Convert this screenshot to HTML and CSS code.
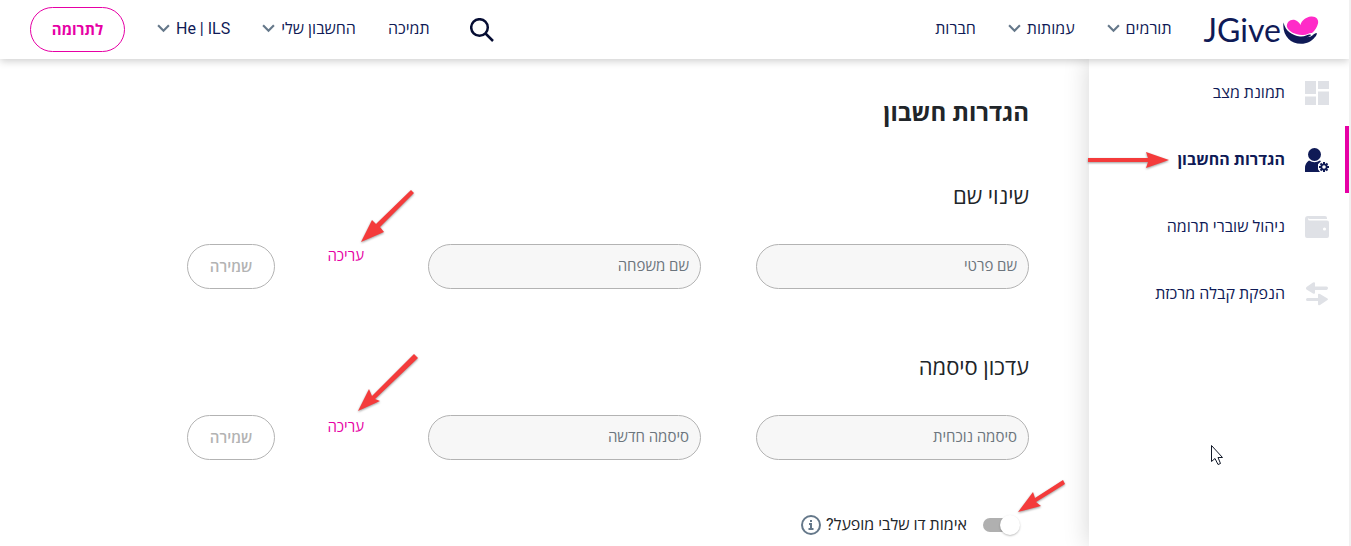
FILE: index.html
```html
<!DOCTYPE html>
<html lang="he" dir="rtl">
<head>
  <meta charset="UTF-8" />
  <title>JGive - הגדרות חשבון</title>
  <link rel="stylesheet" href="styles.css">
</head>
<body>
  <header class="header">
    <a class="logo" href="#" dir="ltr">
      <span>JGive</span>
      <svg width="36" height="28" viewBox="0 0 36 28">
        <path fill="#ff2bc8" d="M4 11C3 6 8 2.500 12 4c3 1 4.500 3 5.500 5C18.500 4.500 23 1 28 .500c5-.500 8 3 7 7-1 4-3 7-6 9.500-3-.500-5 2.500-10 2C12 18.500 6 16 4 11z"/>
        <path fill="#0f1a56" d="M.500 6.500C2.500 15 9 19.500 17 20.500c5 .500 7-2 10-2 2 .200 1 1.500-3 2.800 5 0 7-4.300 9.500-4.300 1 .500-.500 3-1.500 4C29 25 24 27.800 18 27.800 7 27.800-1 19 .500 6.500z"/>
      </svg>
    </a>
    <nav class="nav">
      <a href="#">תורמים <svg class="chevron" viewBox="0 0 12 8"><path d="M1 1l5 5 5-5"/></svg></a>
      <a href="#">עמותות <svg class="chevron" viewBox="0 0 12 8"><path d="M1 1l5 5 5-5"/></svg></a>
      <a href="#">חברות</a>
    </nav>
    <nav class="nav nav-end">
      <button class="search" type="button" aria-label="חיפוש">
        <svg width="24" height="24" viewBox="0 0 24 24"><circle cx="9.500" cy="9.500" r="8.300"/><path d="M15.500 15.500l7.500 7.500"/></svg>
      </button>
      <a href="#">תמיכה</a>
      <a href="#">החשבון שלי <svg class="chevron" viewBox="0 0 12 8"><path d="M1 1l5 5 5-5"/></svg></a>
      <a href="#"><span dir="ltr">He | ILS</span> <svg class="chevron" viewBox="0 0 12 8"><path d="M1 1l5 5 5-5"/></svg></a>
      <button class="btn btn-donate" type="button">לתרומה</button>
    </nav>
  </header>

  <div class="layout">
    <aside class="sidebar">
      <a class="side-item" href="#">
        <svg width="24" height="24" viewBox="0 0 24 24"><path d="M0 0h11v13H0zM13 0h11v8H13zM0 15.500h11V24H0zM13 10.500h11V24H13z"/></svg>
        תמונת מצב
      </a>
      <a class="side-item active" href="#">
        <svg width="24" height="24" viewBox="0 0 24 24">
          <circle cx="9.500" cy="6.500" r="6.500"/>
          <path d="M4 12.500q5.500 3.500 11 0l1 .800-3 3v5l2 2.700H0v-4q0-5 4-7.500z"/>
          <circle cx="19" cy="19" r="2.700" fill="none" stroke="#0f1a56" stroke-width="1.800"/>
          <path fill="none" stroke="#0f1a56" stroke-width="2" d="M19 14v2M19 22v2M14 19h2M22 19h2M15.500 15.500l1.300 1.300M21.200 21.200l1.300 1.300M15.500 22.500l1.300-1.300M21.200 16.800l1.300-1.300"/>
        </svg>
        הגדרות החשבון
      </a>
      <a class="side-item" href="#">
        <svg width="24" height="24" viewBox="0 0 24 24">
          <path d="M3 1h17q2 0 2 2v1H5q-2 0-2-1.200V4q0 1.500 2 1.500h17q2 0 2 2V21q0 2-2 2H2q-2 0-2-2V4q0-3 3-3z"/>
          <circle cx="19.500" cy="14" r="1.600" fill="#fff"/>
        </svg>
        ניהול שוברי תרומה
      </a>
      <a class="side-item" href="#">
        <svg width="24" height="24" viewBox="0 0 24 24">
          <path d="M1.500 5L8 .500q2-1 2 1V4.500h11.500q1.500 0 1.500 1.500T21.500 8H10v2.500q0 2-2 1L1.500 7.500q-1-1 0-2.500zM22.500 16.500L15 12q-2-1-2 1v3H2.500Q1 16 1 17.500T2.500 19H13v3q0 2 2 1l7.500-5q1-.700 0-1.500z"/>
        </svg>
        הנפקת קבלה מרכזת
      </a>
    </aside>

    <main class="content">
      <h1>הגדרות חשבון</h1>

      <form class="section">
        <h2>שינוי שם</h2>
        <div class="row">
          <div class="fields">
            <input type="text" placeholder="שם פרטי" aria-label="שם פרטי">
            <input type="text" placeholder="שם משפחה" aria-label="שם משפחה">
          </div>
          <div class="actions">
            <a class="edit" href="#">עריכה</a>
            <button class="btn" type="button" disabled>שמירה</button>
          </div>
        </div>
      </form>

      <form class="section">
        <h2>עדכון סיסמה</h2>
        <div class="row">
          <div class="fields">
            <input type="password" placeholder="סיסמה נוכחית" aria-label="סיסמה נוכחית">
            <input type="password" placeholder="סיסמה חדשה" aria-label="סיסמה חדשה">
          </div>
          <div class="actions">
            <a class="edit" href="#">עריכה</a>
            <button class="btn" type="button" disabled>שמירה</button>
          </div>
        </div>
      </form>

      <div class="two-step">
        <input class="toggle" type="checkbox" id="two-step">
        <label for="two-step">אימות דו שלבי מופעל?</label>
        <svg class="info" width="20" height="20" viewBox="0 0 20 20"><circle cx="10" cy="10" r="9"/><path d="M10 5v2M8 9h2v5M7.500 14h5"/></svg>
      </div>
    </main>
  </div>

  <!-- pointer arrows over the page -->
  <svg class="marks" width="1349" height="546" viewBox="0 0 1349 546">
    <g class="arrows">
      <path d="M1088 158h60l-2-6 23 8-23 8 2-6h-60z"/>
      <path d="M411 190l3 3-34 34 4 5-23 10 11-22 4 4z"/>
      <path d="M414 354l4 4-43 41 5 2-22 10 11-22 3 7z"/>
      <path d="M1063 480l2 4-29 18 5 4-23 6 15-20 2 6z"/>
    </g>
    <path class="cursor" d="M1211.500 445.500v16l3.500-3 3 6 2.500-1-2.500-6h4.500z"/>
  </svg>
</body>
</html>
```
FILE: styles.css
```css
* {
  box-sizing: border-box;
}
body {
  margin: 0;
  min-height: 100vh;
  overflow: hidden;
  border-right: 2px solid #f1f1f1;
  background: #fff;
  color: #212529;
  font-family: Roboto, "Open Sans", "Liberation Sans", sans-serif;
  font-size: 16px;
  line-height: 24px;
}
a {
  color: inherit;
  text-decoration: none;
}
button, input {
  font-family: inherit;
  font-size: 15px;
}

/* header */
.header {
  position: relative;
  z-index: 2;
  display: flex;
  align-items: center;
  gap: 32px;
  height: 59px;
  padding: 0 30px;
  background: #fff;
  color: #0f1a56;
  box-shadow: 0 2px 8px rgba(0, 0, 0, 0.2);
}
.logo {
  display: flex;
  align-items: center;
  gap: 2px;
  font-family: Lato, sans-serif;
  font-size: 32px;
}
.nav {
  display: flex;
  align-items: center;
  gap: 32px;
  white-space: nowrap;
}
.nav a {
  display: flex;
  align-items: center;
  gap: 6px;
  padding-bottom: 2px;
}
.nav-end {
  margin-right: auto;
}
.chevron {
  width: 13px;
  height: 9px;
  fill: none;
  stroke: #65788a;
  stroke-width: 2;
}
.search {
  display: flex;
  margin-left: 8px;
  padding: 0;
  border: 0;
  background: none;
  fill: none;
  stroke: #060d33;
  stroke-width: 2.5;
}
.btn {
  width: 88px;
  height: 45px;
  padding: 0 0 2px;
  border: 1px solid #b3b3b3;
  border-radius: 23px;
  background: #fff;
  color: #b3b3b3;
  font-weight: 600;
}
.btn-donate {
  width: 95px;
  border-color: #e600a5;
  color: #e600a5;
  font-weight: 700;
}

/* layout */
.layout {
  display: flex;
  min-height: calc(100vh - 59px);
}
.sidebar {
  flex: 0 0 260px;
  color: #0f1a56;
  box-shadow: 0 0 24px rgba(0, 0, 0, 0.17);
}
.side-item {
  display: flex;
  align-items: center;
  gap: 20px;
  height: 67px;
  padding-right: 20px;
}
.side-item svg {
  fill: #dfe1e6;
}
.side-item.active {
  padding-right: 16px;
  border-right: 4px solid #e600a5;
  font-weight: 700;
}
.side-item.active svg {
  fill: #0f1a56;
}
.content {
  flex: 1;
  padding: 38px 60px 0 187px;
}
h1 {
  margin: 0 0 52px;
  font-size: 24px;
  line-height: 32px;
}
h2 {
  margin: 0 0 31px;
  font-size: 22px;
  font-weight: 400;
  line-height: 32px;
}
.section {
  margin-bottom: 63px;
}
.row {
  display: flex;
  gap: 64px;
}
.fields {
  display: flex;
  flex: 1;
  gap: 55px;
}
.fields input {
  flex: 1;
  min-width: 0;
  height: 45px;
  padding: 0 11px 2px;
  border: 1px solid #b3b3b3;
  border-radius: 23px;
  background: #f7f7f7;
}
.fields input::placeholder {
  color: #6c757d;
  opacity: 1;
}
.actions {
  display: flex;
  justify-content: space-between;
  width: 177px;
}
.edit {
  color: #e600a5;
  font-size: 15px;
}

/* two step toggle */
.two-step {
  display: flex;
  align-items: center;
  padding-right: 10px;
  margin-top: -10px;
}
.toggle {
  appearance: none;
  position: relative;
  width: 36px;
  height: 14px;
  margin: 0 0 0 16px;
  border-radius: 7px;
  background: #b0b0b0;
}
.toggle::after {
  content: "";
  position: absolute;
  top: -3px;
  right: -1px;
  width: 20px;
  height: 20px;
  border-radius: 50%;
  background: #fff;
  box-shadow: 0 1px 2px rgba(0, 0, 0, 0.25);
}
.info {
  margin-right: 5px;
  fill: none;
  stroke: #65788a;
  stroke-width: 2;
}

.marks {
  position: absolute;
  z-index: 3;
  top: 0;
  left: 0;
  pointer-events: none;
}
.arrows {
  fill: #f43b3b;
  filter: drop-shadow(0 1px 1px rgba(0, 0, 0, 0.4));
}
.cursor {
  fill: #fff;
  stroke: #111827;
}
```
